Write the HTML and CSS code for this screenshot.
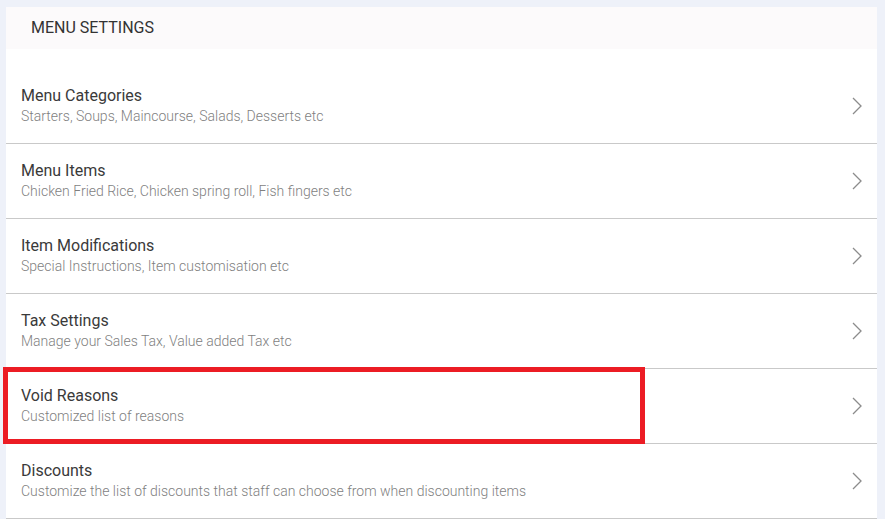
FILE: index.html
```html
<!DOCTYPE html>
<html lang="en">
<head>
    <meta charset="UTF-8">
    <title>Menu Settings</title>
    <link rel="stylesheet" href="styles.css">
</head>
<body>
    <div class="card">
        <div class="card-header">MENU SETTINGS</div>

        <ul class="settings">
            <li class="item">
                <div class="texts">
                    <div class="title">Menu Categories</div>
                    <div class="sub">Starters, Soups, Maincourse, Salads, Desserts etc</div>
                </div>
                <svg class="chevron" width="10" height="18" viewBox="0 0 10 18"><path d="M1 1 L9 9 L1 17" /></svg>
            </li>
            <li class="item">
                <div class="texts">
                    <div class="title">Menu Items</div>
                    <div class="sub">Chicken Fried Rice, Chicken spring roll, Fish fingers etc</div>
                </div>
                <svg class="chevron" width="10" height="18" viewBox="0 0 10 18"><path d="M1 1 L9 9 L1 17" /></svg>
            </li>
            <li class="item">
                <div class="texts">
                    <div class="title">Item Modifications</div>
                    <div class="sub">Special Instructions, Item customisation etc</div>
                </div>
                <svg class="chevron" width="10" height="18" viewBox="0 0 10 18"><path d="M1 1 L9 9 L1 17" /></svg>
            </li>
            <li class="item">
                <div class="texts">
                    <div class="title">Tax Settings</div>
                    <div class="sub">Manage your Sales Tax, Value added Tax etc</div>
                </div>
                <svg class="chevron" width="10" height="18" viewBox="0 0 10 18"><path d="M1 1 L9 9 L1 17" /></svg>
            </li>
            <li class="item marcado">
                <div class="texts">
                    <div class="title">Void Reasons</div>
                    <div class="sub">Customized list of reasons</div>
                </div>
                <svg class="chevron" width="10" height="18" viewBox="0 0 10 18"><path d="M1 1 L9 9 L1 17" /></svg>
                <div class="highlight"></div>
            </li>
            <li class="item">
                <div class="texts">
                    <div class="title">Discounts</div>
                    <div class="sub">Customize the list of discounts that staff can choose from when discounting items</div>
                </div>
                <svg class="chevron" width="10" height="18" viewBox="0 0 10 18"><path d="M1 1 L9 9 L1 17" /></svg>
            </li>
        </ul>
    </div>
</body>
</html>
```

FILE: styles.css
```css
body {
    margin: 0;
    padding: 7px 8px 0 6px;
    background: #eef1f9;
    font-family: Roboto, "Liberation Sans", sans-serif;
    color: #333;
}

.card {
    background: #fff;
}

.card-header {
    background: #fcfafb;
    height: 42px;
    padding-left: 25px;
    padding-bottom: 2px;
    box-sizing: border-box;
    display: flex;
    align-items: center;
    font-size: 16px;
    color: #333;
}

.settings {
    list-style: none;
    margin: 0;
    padding: 20px 0 0 0;
}

.item {
    position: relative;
    height: 74px;
    border-bottom: 1px solid #c9c9c9;
    display: flex;
    align-items: center;
    justify-content: space-between;
    padding: 0 15px 0 15px;
}

.texts {
    display: flex;
    flex-direction: column;
    gap: 3px;
    margin-top: -2px;
}

.title {
    font-size: 16px;
    color: #3a3a3a;
}

.sub {
    font-size: 14px;
    font-weight: 300;
    color: #7f7f7f;
}

.chevron {
    fill: none;
    stroke: #8c8c8c;
    stroke-width: 1.3;
}

.highlight {
    position: absolute;
    top: -2px;
    left: -3px;
    width: 642px;
    height: 77px;
    box-sizing: border-box;
    border: 5px solid #ec1c24;
}
```
